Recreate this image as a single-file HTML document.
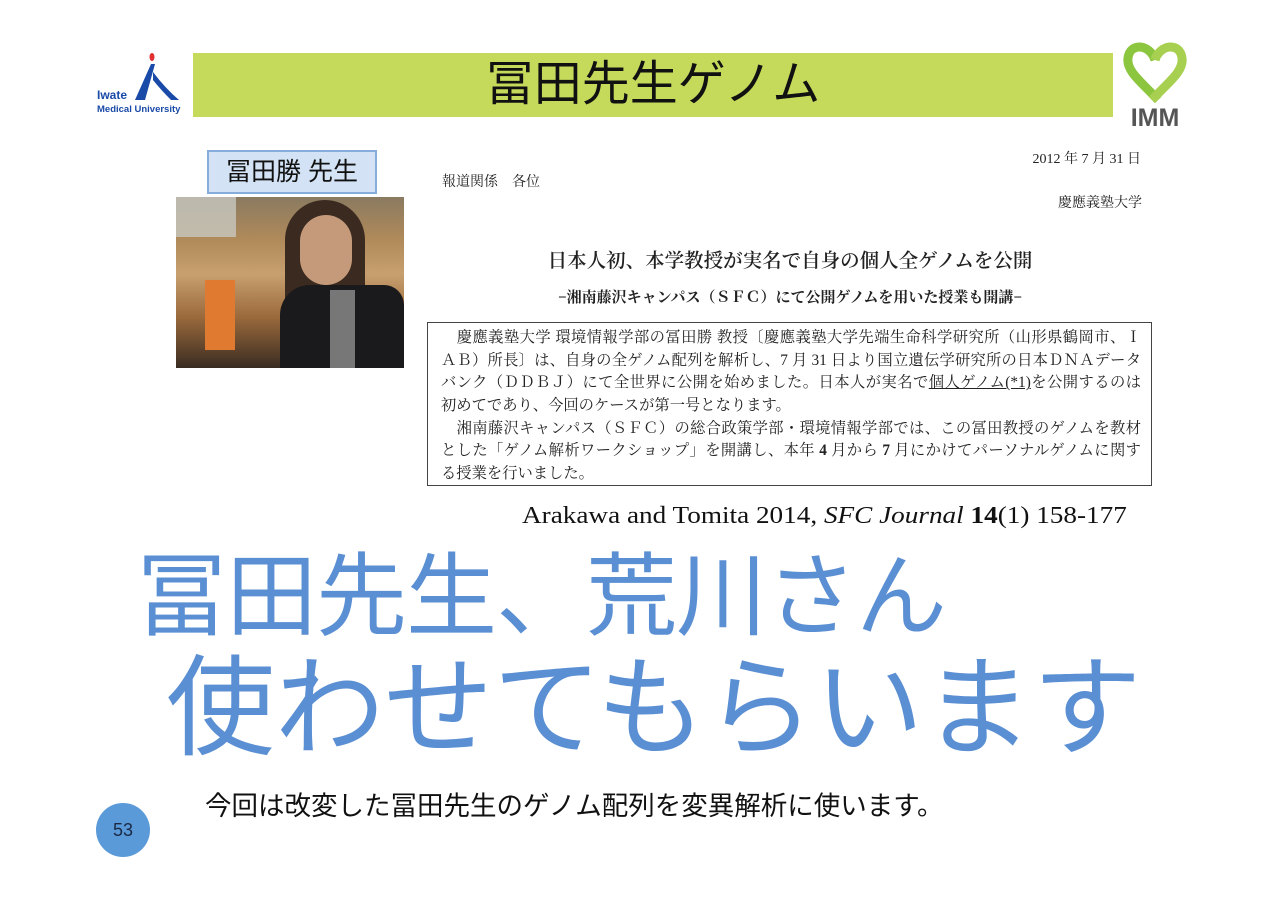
<!DOCTYPE html>
<html><head><meta charset="utf-8"><style>
body{margin:0;width:1280px;height:904px;background:#fff;position:relative;overflow:hidden;font-family:"Liberation Sans","Noto Sans CJK JP",sans-serif}
.a{position:absolute;white-space:nowrap}
.ser{font-family:"Liberation Serif","Noto Serif CJK SC",serif;color:#222}
.ln{display:block;text-align:justify;text-align-last:justify;height:22.7px;line-height:22.7px}
.ln.l{text-align-last:left}
</style></head><body>
<svg class="a" style="left:95px;top:50px" width="90" height="70" viewBox="0 0 90 70">
<ellipse cx="57" cy="7" rx="2.5" ry="4" fill="#e03030"/>
<path d="M56 14 L60 14 L50 50 L40 50 Z" fill="#1a4aa8"/>
<path d="M58 22 Q70 38 84 50 L76 50 Q66 40 58 30 Z" fill="#1a4aa8"/>
<text x="2" y="49" font-size="12" font-weight="bold" fill="#1a4aa8" font-family="Liberation Sans">Iwate</text>
<text x="2" y="62" font-size="9.5" font-weight="bold" fill="#1a4aa8" font-family="Liberation Sans">Medical University</text>
</svg>
<div class="a" style="left:193px;top:53px;width:920px;height:64px;background:#c5d95a"></div>
<div class="a" style="left:193px;top:53px;width:920px;height:64px;line-height:64px;text-align:center;font-size:48px;color:#111">冨田先生ゲノム</div>
<svg class="a" style="left:1120px;top:38px" width="70" height="95" viewBox="0 0 70 95">
<path d="M35 22 C30 6 10 4 8 20 C6 34 24 46 38 62" stroke="#8cc63f" stroke-width="9" fill="none"/>
<path d="M35 22 C40 6 60 4 62 20 C64 34 46 46 32 62" stroke="#a8d050" stroke-width="9" fill="none"/>
<text x="35" y="88" font-size="25" font-weight="bold" fill="#555" text-anchor="middle" font-family="Liberation Sans">IMM</text>
</svg>
<div class="a" style="left:207px;top:150px;width:166px;height:40px;background:#d3e3f5;border:2px solid #86acd9;font-size:25px;line-height:40px;text-align:center;color:#111">冨田勝 先生</div>
<div class="a" style="left:176px;top:197px;width:228px;height:171px;background:linear-gradient(180deg,#8a7a60 0%,#b08a5a 25%,#c8a070 45%,#9b6a3c 70%,#3a2c22 100%)"></div>
<div class="a" style="left:176px;top:197px;width:60px;height:40px;background:#c8c8c0;opacity:.8"></div>
<div class="a" style="left:205px;top:280px;width:30px;height:70px;background:#e07a30"></div>
<div class="a" style="left:285px;top:200px;width:80px;height:140px;border-radius:40px 40px 10px 10px;background:#3a2a20"></div>
<div class="a" style="left:300px;top:215px;width:52px;height:70px;border-radius:26px;background:#c49a7a"></div>
<div class="a" style="left:280px;top:285px;width:124px;height:83px;border-radius:30px 20px 0 0;background:#1a1a1c"></div>
<div class="a" style="left:330px;top:290px;width:25px;height:78px;background:#777"></div>
<div class="a ser" style="left:1000px;width:141px;text-align:right;top:148px;font-size:14px">2012 年 7 月 31 日</div>
<div class="a ser" style="left:442px;top:171px;font-size:14px">報道関係　各位</div>
<div class="a ser" style="left:1000px;width:142px;text-align:right;top:192px;font-size:14px">慶應義塾大学</div>
<div class="a ser" style="left:420px;width:740px;text-align:center;top:245px;font-size:19.5px;font-weight:600">日本人初、本学教授が実名で自身の個人全ゲノムを公開</div>
<div class="a ser" style="left:420px;width:740px;text-align:center;top:286px;font-size:15px;font-weight:bold">−湘南藤沢キャンパス（ＳＦＣ）にて公開ゲノムを用いた授業も開講−</div>
<div class="a ser" style="left:427px;top:322px;width:725px;height:164px;border:1.5px solid #444;font-size:15.3px;white-space:nowrap;padding:4px 10px 0 13px;box-sizing:border-box">
<span class="ln">　慶應義塾大学 環境情報学部の冨田勝 教授〔慶應義塾大学先端生命科学研究所（山形県鶴岡市、Ｉ</span>
<span class="ln">ＡＢ）所長〕は、自身の全ゲノム配列を解析し、7 月 31 日より国立遺伝学研究所の日本ＤＮＡデータ</span>
<span class="ln">バンク（ＤＤＢＪ）にて全世界に公開を始めました。日本人が実名で<u>個人ゲノム(*1)</u>を公開するのは</span>
<span class="ln l">初めてであり、今回のケースが第一号となります。</span>
<span class="ln">　湘南藤沢キャンパス（ＳＦＣ）の総合政策学部・環境情報学部では、この冨田教授のゲノムを教材</span>
<span class="ln">とした「ゲノム解析ワークショップ」を開講し、本年 <b>4</b> 月から <b>7</b> 月にかけてパーソナルゲノムに関す</span>
<span class="ln l">る授業を行いました。</span>
</div>
<div class="a ser" style="left:522px;top:502px;font-size:24.5px;color:#111;transform-origin:0 0;transform:scaleX(1.11)">Arakawa and Tomita 2014, <i>SFC Journal</i> <b>14</b>(1) 158-177</div>
<div class="a" style="left:136px;top:548px;font-size:91px;line-height:100px;color:#5b8fd3;letter-spacing:-1px">冨田先生、荒川さん</div>
<div class="a" style="left:166px;top:652px;font-size:109px;line-height:115px;color:#5b8fd3">使わせてもらいます</div>
<div class="a" style="left:205px;top:784px;font-size:26.5px;color:#111">今回は改変した冨田先生のゲノム配列を変異解析に使います。</div>
<div class="a" style="left:96px;top:803px;width:54px;height:54px;border-radius:50%;background:#5b9ad8;color:#1a2a44;font-size:18px;line-height:54px;text-align:center">53</div>
</body></html>
